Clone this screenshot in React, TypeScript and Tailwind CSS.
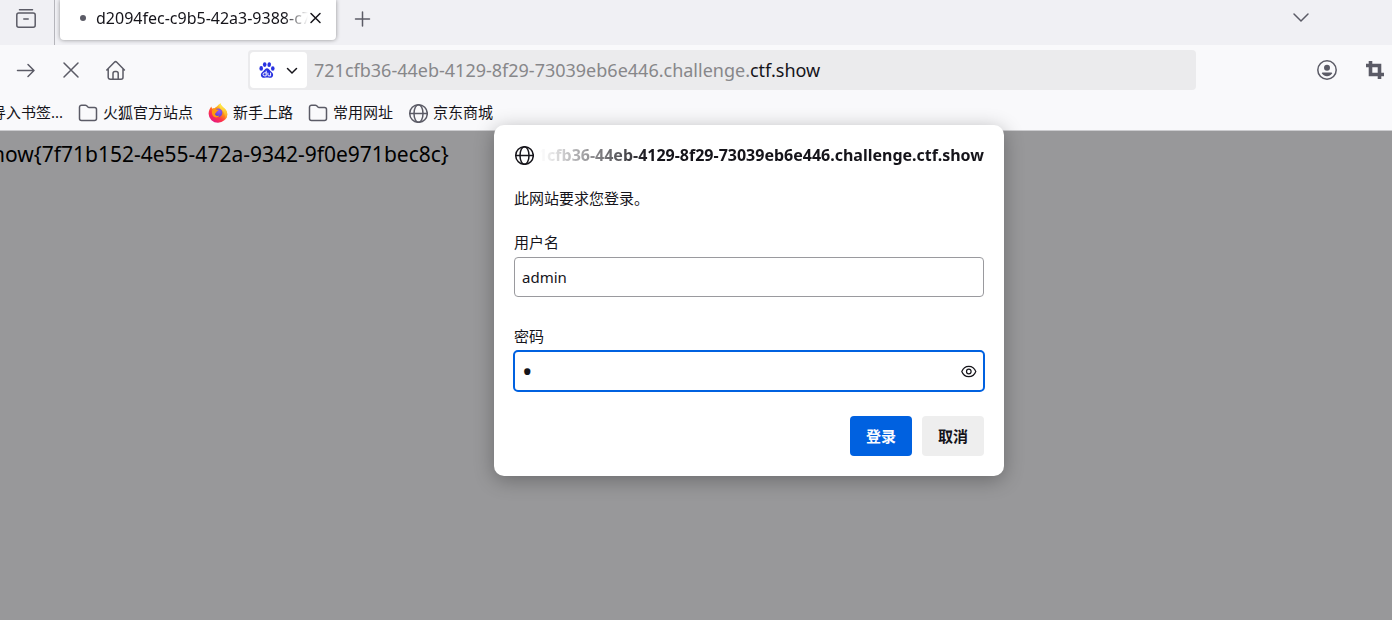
import type { ReactNode } from "react";

const host = "721cfb36-44eb-4129-8f29-73039eb6e446.challenge."
const domain = "ctf.show"

function FolderIcon() {
    return <svg className="size-5 shrink-0 text-[#5b5b66]" viewBox="0 0 20 20" fill="none" stroke="currentColor" strokeWidth="1.5">
        <path d="M1.5 4.2a2 2 0 0 1 2-2h3.8c.6 0 1 .2 1.4.6l1.2 1.2c.3.3.7.5 1.1.5h5.5a2 2 0 0 1 2 2v9a2 2 0 0 1-2 2h-13a2 2 0 0 1-2-2z"/>
    </svg>
}

function GlobeIcon({className}: { className: string }) {
    return <svg className={`size-5 shrink-0 ${className}`} viewBox="0 0 20 20" fill="none" stroke="currentColor" strokeWidth="1.5">
        <circle cx="10.5" cy="10.5" r="8.8"/>
        <ellipse cx="10.5" cy="10.5" rx="4.5" ry="8.8"/>
        <path d="M1.7 10.5h17.6"/>
    </svg>
}

function FirefoxIcon() {
    return <svg className="size-5 shrink-0" viewBox="0 0 20 20">
        <defs>
            <linearGradient id="fox" x1="0.8" y1="0.1" x2="0.2" y2="0.95">
                <stop offset="0" stopColor="#fff44f"/>
                <stop offset="0.35" stopColor="#ff980e"/>
                <stop offset="0.65" stopColor="#ff3647"/>
                <stop offset="1" stopColor="#e31587"/>
            </linearGradient>
            <linearGradient id="tail" x1="0.6" y1="0" x2="0.5" y2="1">
                <stop offset="0" stopColor="#fff44f"/>
                <stop offset="0.6" stopColor="#ffbd2f"/>
                <stop offset="1" stopColor="#ff7a1f"/>
            </linearGradient>
            <radialGradient id="core" cx="0.6" cy="0.3" r="0.8">
                <stop offset="0" stopColor="#9059ff"/>
                <stop offset="1" stopColor="#5b3fc0"/>
            </radialGradient>
        </defs>
        <path fill="url(#fox)" d="M3.4 3.6c.1 1 .5 1.7 1 2.1C5 5.3 6 5.2 6.6 5.3 7.3 4.4 8 3.9 8.9 3.6 9.7 2.4 11 1.2 12.6.3c.2 1.7.9 2.5 2.2 3.7 2.5 2 4.5 3.7 4.5 7.2A9.3 9.3 0 0 1 10 19.8a9.3 9.3 0 0 1-9.4-9C.6 8 1.8 5.3 3.4 3.6z"/>
        <circle cx="10.2" cy="9.8" r="4.2" fill="url(#core)"/>
        <path fill="#ff980e" d="M4.5 6.2c1.5-.9 3-.5 3.9.4 1 .1 2 .1 2.2.4 0 .8-1.7 1-2 1.8-.2 1.2-1.6 1.2-1.6 2.5.6 2 3 2 4.4 1.3-1 2.3-4.8 2.7-6.5.2-1.2-1.8-1.3-4.6-.4-6.6z"/>
        <path fill="url(#tail)" d="M12.6.3c.2 1.7.9 2.5 2.2 3.7 2.5 2 4.5 3.7 4.5 7.2 0 2-.8 4-2.2 5.5.4-2.2.2-3.8-.6-5-.2-2.9-1.7-4-3.2-5.3C11.2 4.8 11 2.4 12.6.3z"/>
    </svg>
}

function BaiduIcon() {
    return <svg className="size-4 shrink-0" viewBox="0 0 16 16" fill="#2932e1">
        <ellipse cx="2.2" cy="6.4" rx="1.8" ry="2.3"/>
        <ellipse cx="5.7" cy="2.6" rx="1.8" ry="2.4"/>
        <ellipse cx="10.2" cy="2.7" rx="1.8" ry="2.4" transform="rotate(8 10.2 2.7)"/>
        <ellipse cx="13.8" cy="6.5" rx="1.8" ry="2.3"/>
        <path d="M8 6.2c1.7 0 2.3 1.5 3.5 2.7 1.5 1.4 2.9 2.3 2.6 4.3-.3 2-1.9 2.7-3.6 2.5-1.6-.2-3.4-.2-5 0-1.7.2-3.3-.5-3.6-2.5-.3-2 1.1-2.9 2.6-4.3C5.7 7.7 6.3 6.2 8 6.2z"/>
        <g fill="none" stroke="#fff" strokeWidth="1">
            <path d="M7.2 8.7v5.2H5.6a1.5 1.5 0 0 1 0-3.1h1.6M8.9 10.7v2.2c0 .7.3 1 1 1h1.7v-3.2"/>
        </g>
    </svg>
}

function Bookmark({icon, children}: { icon: ReactNode, children: ReactNode }) {
    return <a href="#" className="flex items-center gap-[5px] whitespace-nowrap">
        {icon}
        {children}
    </a>
}

function TabBar() {
    return <div className="flex h-[45px] items-start bg-[#f0f0f4] text-[#5b5b66]">
        <button aria-label="Recent" className="flex h-full w-[55px] items-center border-r border-[#b5b5bb] pb-2 pl-4">
            <svg className="size-5" viewBox="0 0 20 20" fill="none" stroke="currentColor" strokeWidth="1.5" strokeLinecap="round">
                <rect x="0.8" y="4" width="18.4" height="14.2" rx="2"/>
                <path d="M3.5 0.8h13M7.8 10h4.4"/>
            </svg>
        </button>
        <div className="ml-[5px] flex h-10 w-[276px] items-center rounded-b-[4px] bg-white pr-3 pb-[5px] pl-5 text-[#15141a] shadow-[0_0_4px_rgba(0,0,0,0.4)]">
            <span className="size-[6px] shrink-0 rounded-full bg-[#5b5b66]"/>
            <span className="ml-[10px] flex-1 overflow-hidden text-base whitespace-nowrap [mask-image:linear-gradient(to_left,transparent,black_24px)]">d2094fec-c9b5-42a3-9388-c7</span>
            <button aria-label="Close tab">
                <svg className="size-4" viewBox="0 0 16 16" stroke="currentColor" strokeWidth="1.5" strokeLinecap="round">
                    <path d="M3 3.500l9 9M12 3.500l-9 9"/>
                </svg>
            </button>
        </div>
        <button aria-label="New tab" className="ml-4 flex h-[38px] items-center">
            <svg className="size-5" viewBox="0 0 20 20" stroke="currentColor" strokeWidth="1.5" strokeLinecap="round">
                <path d="M10.5 3v14M3.5 10h14"/>
            </svg>
        </button>
        <button aria-label="List all tabs" className="mr-[81px] ml-auto flex h-[36px] items-center">
            <svg className="size-5" viewBox="0 0 20 20" fill="none" stroke="currentColor" strokeWidth="1.5" strokeLinecap="round">
                <path d="M3 6l7 7 7-7"/>
            </svg>
        </button>
    </div>
}

function Toolbar() {
    return <div className="flex h-[50px] items-center pr-[7px] pl-4 text-[#5b5b66]">
        <div className="flex items-center gap-[25px]">
            <button aria-label="Forward">
                <svg className="size-5" viewBox="0 0 20 20" fill="none" stroke="currentColor" strokeWidth="1.5" strokeLinecap="round" strokeLinejoin="round">
                    <path d="M1.500 10.500h16.500M12 4.500l6 6-6 6"/>
                </svg>
            </button>
            <button aria-label="Stop">
                <svg className="size-5" viewBox="0 0 20 20" stroke="currentColor" strokeWidth="1.5" strokeLinecap="round">
                    <path d="M3 3l14 14M17 3L3 17"/>
                </svg>
            </button>
            <button aria-label="Home">
                <svg className="size-5" viewBox="0 0 20 20" fill="none" stroke="currentColor" strokeWidth="1.5" strokeLinecap="round" strokeLinejoin="round">
                    <path d="M0.8 10l7.6-7.8a1.7 1.7 0 0 1 2.4 0L18.4 10M2.2 8.8v8.4a2 2 0 0 0 2 2h10.8a2 2 0 0 0 2-2V8.8M7 19v-5.5a2 2 0 0 1 2-2h1.2a2 2 0 0 1 2 2V19"/>
                </svg>
            </button>
        </div>
        <div className="mr-[121px] ml-[122px] flex h-10 flex-1 items-center rounded-[4px] bg-[#ebebed] p-[2px]">
            <button aria-label="Search engine" className="flex h-full w-[57px] items-center gap-[9px] rounded-[4px] bg-white pl-[9px] text-[#15141a]">
                <BaiduIcon/>
                <svg className="size-4" viewBox="0 0 16 16" fill="none" stroke="currentColor" strokeWidth="1.5" strokeLinecap="round">
                    <path d="M3.5 6.5L8 11l4.5-4.5"/>
                </svg>
            </button>
            <span className="pl-[7px] text-lg whitespace-nowrap text-[#87878a]">
                {host}<span className="text-[#15141a]">{domain}</span>
            </span>
        </div>
        <button aria-label="Account">
            <svg className="size-5" viewBox="0 0 20 20" fill="currentColor">
                <circle cx="10" cy="10" r="9.2" fill="none" stroke="currentColor" strokeWidth="1.5"/>
                <circle cx="10" cy="7.8" r="3"/>
                <path d="M5.6 12.5h8.8c.6 0 1 .6.7 1.1a6.2 6.2 0 0 1-10.2 0c-.3-.5.1-1.100.7-1.100z"/>
            </svg>
        </button>
        <button aria-label="Screenshot" className="ml-7">
            <svg className="size-5" viewBox="0 0 20 20" fill="none" stroke="currentColor" strokeWidth="3.6">
                <path d="M5.5 1v13.500H19M1 5.500h13.500V19"/>
            </svg>
        </button>
    </div>
}

function LoginDialog() {
    return <form role="dialog" className="absolute top-[125px] left-[494px] flex w-[510px] flex-col rounded-[10px] bg-white p-5 text-[15px] leading-5 text-[#15141a] shadow-[0_4px_20px_rgba(0,0,0,0.3)]">
        <div className="flex h-5 items-center gap-[6px] text-base leading-5 font-bold">
            <GlobeIcon className="text-[#15141a]"/>
            <div className="flex flex-1 justify-end overflow-hidden whitespace-nowrap [mask-image:linear-gradient(to_right,transparent,black_110px)]">
                {host}{domain}
            </div>
        </div>
        <p className="mt-[23px]">此网站要求您登录。</p>
        <label htmlFor="username" className="mt-6">用户名</label>
        <input id="username" defaultValue="admin" className="mt-[5px] h-10 rounded-[4px] border border-[#9a9a9e] px-[7px] outline-none"/>
        <label htmlFor="password" className="mt-[29px]">密码</label>
        <div className="relative -mx-px mt-1 flex">
            <input id="password" type="password" defaultValue="1" className="h-[42px] flex-1 rounded-[5px] border-2 border-[#0061e0] px-[7px] text-[28px] outline-none"/>
            <button type="button" aria-label="Show password" className="absolute top-[13px] right-2">
                <svg className="size-4" viewBox="0 0 16 16" fill="none" stroke="currentColor" strokeWidth="1.2">
                    <path d="M.8 8.500C2 5.300 4.800 3.300 7.800 3.300s5.800 2 7 5.200c-1.200 3.200-4 5.200-7 5.200S2 11.700.8 8.500z"/>
                    <circle cx="7.8" cy="8.5" r="2.3"/>
                </svg>
            </button>
        </div>
        <div className="mt-6 flex justify-end gap-[10px] font-bold">
            <button type="button" className="h-10 w-[62px] rounded-[4px] bg-[#0061e0] text-[#fbfbfe]">登录</button>
            <button type="button" className="h-10 w-[62px] rounded-[4px] bg-[#eeeeee]">取消</button>
        </div>
    </form>
}

export default function App() {
    return <div className="relative flex min-h-screen flex-col overflow-hidden bg-[#f9f9fb] font-['Noto_Sans','Noto_Sans_CJK_SC',sans-serif]">
        <TabBar/>
        <Toolbar/>
        <nav className="flex h-[35px] items-center gap-[15px] text-[15px] text-[#15141a]">
            <a href="#" className="-ml-[9px] whitespace-nowrap">导入书签...</a>
            <Bookmark icon={<FolderIcon/>}>火狐官方站点</Bookmark>
            <Bookmark icon={<FirefoxIcon/>}>新手上路</Bookmark>
            <Bookmark icon={<FolderIcon/>}>常用网址</Bookmark>
            <Bookmark icon={<GlobeIcon className="text-[#5b5b66]"/>}>京东商城</Bookmark>
        </nav>
        <main className="flex-1 border-t border-[#cccccf] bg-[#98989a] pt-[7px] text-[21px] leading-8 text-black">
            <p className="-ml-2 whitespace-nowrap">how&#123;7f71b152-4e55-472a-9342-9f0e971bec8c&#125;</p>
        </main>
        <LoginDialog/>
    </div>
}
